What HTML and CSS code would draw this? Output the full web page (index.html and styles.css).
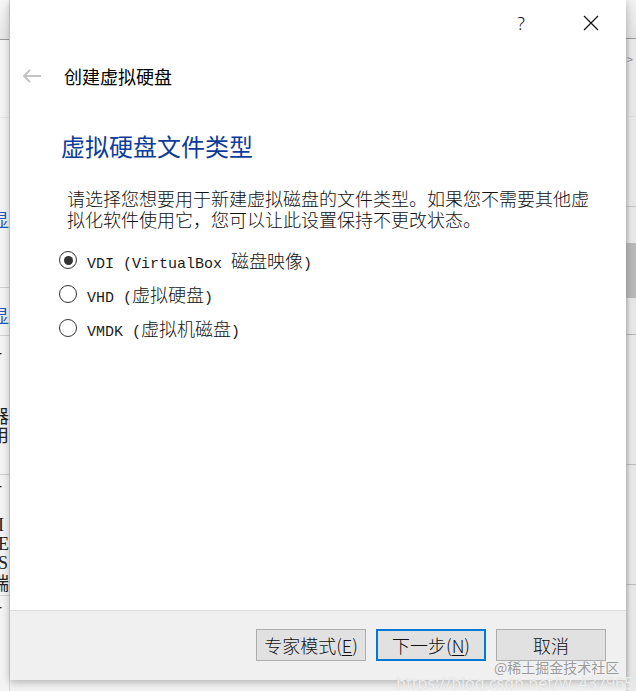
FILE: index.html
```html
<!DOCTYPE html>
<html lang="zh-CN">
<head>
<meta charset="utf-8">
<title>创建虚拟硬盘</title>
<link rel="stylesheet" href="styles.css">
</head>
<body>
<div class="desk">
  <div class="bg-left">
    <div class="seg s1"></div>
    <div class="seg s2"></div>
    <div class="seg s3"><span class="frag blue f-a">显</span><span class="frag f-b">:</span></div>
    <div class="seg s4"><span class="frag blue f-c">显</span></div>
    <div class="seg s5"><span class="frag f-d">-</span><span class="frag f-e">:</span><span class="frag f-f">器</span><span class="frag f-g">用</span></div>
    <div class="seg s6"><span class="frag f-h">-</span><span class="frag lat f-i">I</span><span class="frag lat">E</span><span class="frag lat">S</span><span class="frag">端</span></div>
    <div class="seg s7"><span class="frag f-j">-</span></div>
  </div>

  <div class="dialog">
    <div class="titlebar">
      <span class="help">?</span>
      <svg class="close" width="16" height="16" viewBox="0 0 16 16"><path d="M1 1L15 15M15 1L1 15" stroke="#111" stroke-width="1.2" fill="none"/></svg>
    </div>
    <div class="header">
      <svg class="back" width="20" height="14" viewBox="0 0 20 14"><path d="M19 7H2M8 1L2 7L8 13" stroke="#c4c4c4" stroke-width="2" fill="none"/></svg>
      <span class="wtitle">创建虚拟硬盘</span>
    </div>
    <div class="content">
      <h1 class="heading">虚拟硬盘文件类型</h1>
      <p class="desc">请选择您想要用于新建虚拟磁盘的文件类型。如果您不需要其他虚<br>拟化软件使用它，您可以让此设置保持不更改状态。</p>
      <div class="options">
        <div class="opt"><span class="radio checked"></span><span class="label"><span class="lat">VDI (VirtualBox </span>磁盘映像<span class="lat">)</span></span></div>
        <div class="opt"><span class="radio"></span><span class="label"><span class="lat">VHD (</span>虚拟硬盘<span class="lat">)</span></span></div>
        <div class="opt"><span class="radio"></span><span class="label"><span class="lat">VMDK (</span>虚拟机磁盘<span class="lat">)</span></span></div>
      </div>
    </div>
    <div class="buttons">
      <button class="btn">专家模式(<u>E</u>)</button>
      <button class="btn default">下一步(<u>N</u>)</button>
      <button class="btn">取消</button>
    </div>
  </div>

  <div class="bg-right">
    <div class="rseg r1"></div>
    <div class="rseg r2"><span class="chev">&gt;</span></div>
    <div class="rseg r3"></div>
    <div class="rseg r4"></div>
    <div class="thumb"></div>
    <div class="rseg r5"></div>
    <div class="rseg r6"></div>
    <div class="rseg r7"></div>
    <div class="rseg r8"></div>
  </div>

  <div class="watermark">
    <span class="wm1">@稀土掘金技术社区</span>
    <span class="wm2">https://blog.csdn.net/w_43796515</span>
  </div>
</div>
</body>
</html>
```

FILE: styles.css
```css
* { box-sizing: border-box; }
html, body {
  margin: 0;
  padding: 0;
  width: 636px;
  height: 691px;
  overflow: hidden;
  background: #f2f2f2;
  font-family: "Noto Sans CJK SC", "Noto Sans", sans-serif;
}
.desk {
  position: relative;
  display: flex;
  width: 636px;
  height: 691px;
}

/* background window left */
.bg-left {
  width: 10px;
  height: 691px;
  display: flex;
  flex-direction: column;
  overflow: hidden;
  background: #f3f3f3;
  border-right: 1px solid #d8d8d8;
}
.seg { border-bottom: 1px solid #cfcfcf; display: flex; flex-direction: column; overflow: hidden; }
.s1 { height: 40px; background: linear-gradient(#f7f7f7, #e4e4e4); border-bottom: 1px solid #9a9a9a; }
.s2 { height: 78px; border-bottom: 1px solid #e6e6e6; }
.s3 { height: 170px; }
.s4 { height: 48px; }
.s5 { height: 139px; }
.s6 { height: 121px; }
.s7 { flex: 1; border-bottom: none; }
.frag {
  font-size: 18px;
  line-height: 19px;
  margin-left: -9px;
  color: #222;
  white-space: nowrap;
}
.frag.lat { font-family: "Liberation Serif", serif; margin-left: -2px; }
.frag.blue { color: #2a55b8; }
.f-a { margin-top: 92px; }
.f-b { margin-top: 40px; margin-left: -4px; }
.f-c { margin-top: 18px; }
.f-d { margin-top: 6px; margin-left: -4px; }
.f-e { margin-top: 24px; margin-left: -4px; }
.f-f { margin-top: 2px; }
.f-h { margin-top: 0; margin-left: -4px; }
.f-i { margin-top: 22px; }
.f-j { margin-left: -4px; }

/* dialog */
.dialog {
  width: 616px;
  height: 680px;
  background: #fff;
  display: flex;
  flex-direction: column;
  box-shadow: 0 2px 8px rgba(0,0,0,0.28);
  z-index: 2;
}
.titlebar {
  height: 46px;
  display: flex;
  align-items: center;
  justify-content: flex-end;
  padding-right: 27px;
}
.help {
  font-family: "Noto Sans", sans-serif;
  font-size: 18px;
  color: #111;
  margin-right: 58px;
  font-weight: 300;
}
.close { display: block; }
.header {
  height: 30px;
  margin-top: 15px;
  display: flex;
  align-items: center;
}
.back { margin-left: 12px; margin-right: 22px; }
.wtitle {
  font-size: 18px;
  color: #000;
  line-height: 30px;
}
.content {
  flex: 1;
  padding-left: 51px;
}
.heading {
  margin: 39px 0 0 0;
  font-size: 24px;
  line-height: 32px;
  font-weight: 400;
  color: #0d3d99;
}
.desc {
  margin: 26px 0 0 6px;
  font-size: 18px;
  line-height: 21px;
  color: #111;
  font-weight: 300;
}
.options {
  margin-top: 13px;
  display: flex;
  flex-direction: column;
}
.opt {
  height: 34px;
  display: flex;
  align-items: center;
}
.radio {
  width: 18px;
  height: 18px;
  border: 1px solid #333;
  border-radius: 50%;
  margin-left: -2px;
  margin-right: 10px;
  display: flex;
  align-items: center;
  justify-content: center;
  background: #fff;
}
.radio.checked::after {
  content: "";
  width: 9px;
  height: 9px;
  border-radius: 50%;
  background: #333;
}
.label {
  font-family: "Noto Sans CJK SC", sans-serif;
  font-size: 18px;
  color: #111;
  font-weight: 300;
  white-space: pre;
}
.label .lat {
  font-family: "Liberation Mono", monospace;
  font-size: 15px;
  font-weight: 400;
  color: #1a1a1a;
}

.buttons {
  height: 70px;
  background: #f0f0f0;
  border-top: 1px solid #dcdcdc;
  display: flex;
  justify-content: flex-end;
  align-items: flex-start;
  padding: 18px 20px 0 0;
  gap: 10px;
}
.btn {
  width: 110px;
  height: 32px;
  background: #e1e1e1;
  border: 1px solid #adadad;
  font-family: "Noto Sans CJK SC", sans-serif;
  font-size: 18px;
  font-weight: 300;
  color: #111;
  padding: 0;
  line-height: 28px;
}
.btn u { text-underline-offset: 2px; }
.btn.default { border: 2px solid #0078d7; }

/* background window right */
.bg-right {
  width: 10px;
  height: 691px;
  display: flex;
  flex-direction: column;
  background: linear-gradient(90deg, #d4d4d4, #ececec 40%, #e6e6e6);
  overflow: hidden;
}
.rseg { border-bottom: 1px solid #bdbdbd; overflow: hidden; }
.r1 { height: 39px; background: linear-gradient(#f2f2f2, #e2e2e2); border-bottom: 1px solid #9a9a9a; }
.r2 { height: 78px; border-bottom: 1px solid #dddddd; }
.chev { font-size: 11px; color: #888; margin-left: 1px; line-height: 40px; }
.r3 { height: 90px; border-bottom: 1px solid #c4c4c4; }
.r4 { height: 36px; border-bottom: none; }
.thumb { height: 55px; background: #b9b9b9; }
.r5 { height: 37px; border-bottom: 1px solid #b4b4b4; }
.r6 { height: 130px; }
.r7 { height: 120px; }
.r8 { flex: 1; border-bottom: none; }

/* watermark overlay */
.watermark {
  position: absolute;
  right: 0;
  bottom: 0;
  width: 240px;
  height: 40px;
  z-index: 5;
  pointer-events: none;
}
.wm1 {
  position: absolute;
  left: 98px;
  top: 6px;
  font-size: 14px;
  color: #9a9a9a;
  white-space: nowrap;
  text-shadow: 0 0 1px #fff;
}
.wm2 {
  position: absolute;
  left: 0;
  top: 21px;
  font-family: "Noto Sans", sans-serif;
  font-size: 16px;
  color: rgba(255,255,255,0.75);
  white-space: nowrap;
  text-shadow: 0 0 1px rgba(120,120,120,0.35);
}
```
